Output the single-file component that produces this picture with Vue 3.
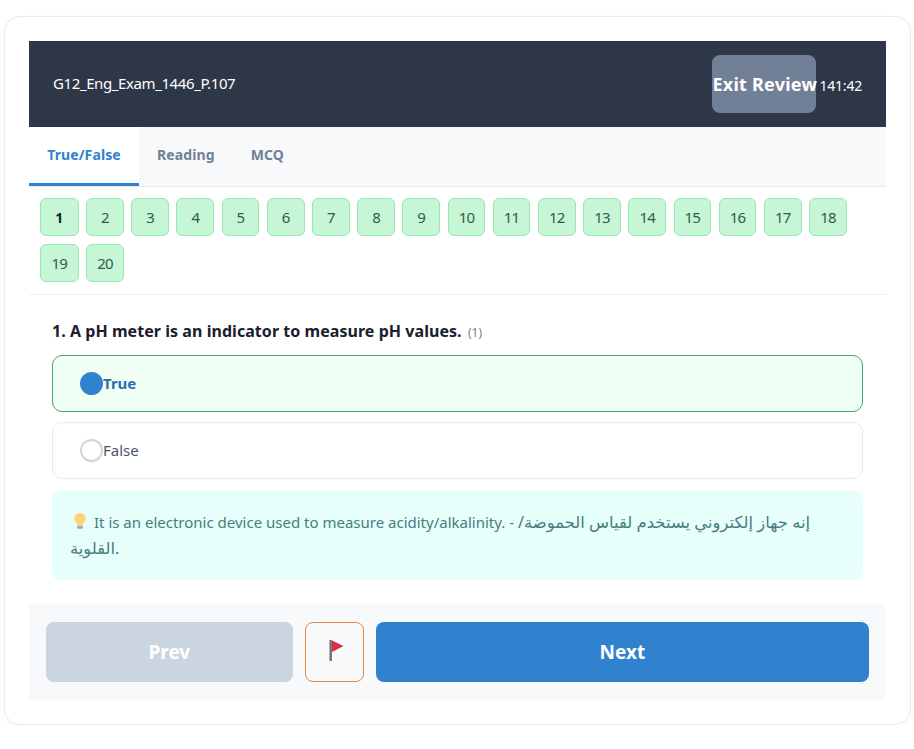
<script setup>
const tabs = ['True/False', 'Reading', 'MCQ']
const numbers = Array.from({ length: 20 }, (_, i) => i + 1)
</script>

<template>
  <div class="page">
    <main class="card">
      <header class="top">
        <h1 class="title">G12_Eng_Exam_1446_P.107</h1>
        <div class="top-right">
          <button class="exit">Exit Review</button>
          <span class="timer">141:42</span>
        </div>
      </header>
      <nav class="tabs">
        <button v-for="(t, i) in tabs" :key="t" class="tab" :class="{ active: i === 0 }">{{ t }}</button>
      </nav>
      <div class="numbers">
        <button v-for="n in numbers" :key="n" class="num" :class="{ current: n === 1 }">{{ n }}</button>
      </div>
      <section class="body">
        <p class="question">1. A pH meter is an indicator to measure pH values. <span class="mark">(1)</span></p>
        <div class="option chosen">
          <span class="radio filled"></span>
          <span>True</span>
        </div>
        <div class="option">
          <span class="radio"></span>
          <span>False</span>
        </div>
        <div class="hint">
          <svg class="bulb" viewBox="0 0 14 18" width="14" height="18" aria-hidden="true">
            <path d="M7 1a5.600 5.600 0 0 0-5.600 5.600c0 2.300 1.400 3.400 2.300 5 .3.500.4 1 .4 1.400h5.800c0-.5.1-1 .4-1.400.9-1.600 2.300-2.700 2.300-5A5.600 5.600 0 0 0 7 1z" fill="#fdd575"/>
            <rect x="4.200" y="13.400" width="5.600" height="3.400" rx="1" fill="#a8a8a8"/>
          </svg>
          <span>It is an electronic device used to measure acidity/alkalinity. - </span>
          <span class="arabic">إنه جهاز إلكتروني يستخدم لقياس الحموضة/</span>
          <span class="arabic">القلوية.</span>
        </div>
      </section>
      <footer class="foot">
        <button class="btn prev">Prev</button>
        <button class="flag" aria-label="Flag">
          <svg viewBox="0 0 20 24" width="20" height="24" aria-hidden="true">
            <rect x="5.500" y="0" width="2.400" height="21" fill="#6b6f78"/>
            <path d="M8 .5 19.500 6 8 12z" fill="#dd2e44"/>
          </svg>
        </button>
        <button class="btn next">Next</button>
      </footer>
    </main>
  </div>
</template>

<style>
html, body { margin: 0; background: #fff; }
</style>

<style scoped>
.page {
  padding: 16px 3px 0 4px;
  font-family: "Noto Sans", "DejaVu Sans", sans-serif;
  color: #1a202c;
}
.card {
  box-sizing: border-box;
  height: 709px;
  padding: 24px;
  background: #fff;
  border: 1px solid #e9ebee;
  border-radius: 16px;
  box-shadow: 0 4px 12px rgba(0, 0, 0, 0.025);
}
button { font-family: inherit; cursor: pointer; }
.top {
  display: flex;
  align-items: center;
  justify-content: space-between;
  height: 86px;
  padding: 0 24px;
  background: #2d3748;
  color: #fff;
}
.title { margin: -2px 0 0; font-size: 15px; font-weight: 400; letter-spacing: -0.4px; }
.top-right { display: flex; align-items: center; gap: 3px; }
.exit {
  width: 104px;
  height: 58px;
  padding: 0;
  border: 0;
  border-radius: 8px;
  background: #718096;
  color: #fff;
  font-size: 18px;
  font-weight: 700;
  letter-spacing: 0.25px;
  white-space: nowrap;
}
.timer { font-size: 14px; letter-spacing: -0.2px; margin-top: 2px; }
.tabs {
  display: flex;
  height: 60px;
  box-sizing: border-box;
  background: #f7f9fb;
  border-bottom: 1px solid #e2e8f0;
}
.tab {
  box-sizing: border-box;
  height: 59px;
  padding: 0 18px 2px;
  border: 0;
  border-bottom: 3px solid transparent;
  background: transparent;
  color: #718096;
  font-size: 14px;
  font-weight: 700;
  letter-spacing: 0.1px;
}
.tab.active { width: 110px; background: #fff; color: #3182ce; border-bottom-color: #3182ce; }
.numbers {
  display: flex;
  flex-wrap: wrap;
  gap: 8px 7.500px;
  padding: 11px;
  height: 108px;
  box-sizing: border-box;
  border-bottom: 1px solid #edf0f4;
  align-content: flex-start;
}
.num {
  box-sizing: border-box;
  width: 37.700px;
  height: 38px;
  padding: 0;
  border: 1px solid #9ae6b4;
  border-radius: 6px;
  background: #c6f6d5;
  color: #2c6044;
  font-size: 15px;
  letter-spacing: -0.8px;
}
.num:nth-child(18n+1) { width: 38.600px; }
.num.current { font-weight: 700; color: #1a202c; font-size: 14px; letter-spacing: 0; }
.body { padding: 24px 23px 0; }
.question { margin: 0 0 10px; font-size: 16px; font-weight: 700; line-height: 24px; color: #1a202c; letter-spacing: 0.05px; }
.mark { margin-left: 2px; font-size: 12px; font-weight: 400; color: #718096; }
.option {
  box-sizing: border-box;
  display: flex;
  align-items: center;
  height: 57px;
  margin-bottom: 10px;
  padding: 0 27px;
  border: 1px solid #e8eaed;
  border-radius: 10px;
  font-size: 15px;
  color: #4a5568;
}
.option span:last-child { margin-top: -1px; }
.option.chosen { border-color: #48a278; background: #f0fff4; color: #2b6cb0; font-weight: 700; }
.radio {
  box-sizing: border-box;
  flex: none;
  width: 23px;
  height: 23px;
  border: 2px solid #d1d5db;
  border-radius: 50%;
}
.radio.filled { border-color: #3182ce; background: #3182ce; }
.hint {
  box-sizing: border-box;
  height: 89px;
  margin-top: 12px;
  padding: 18px;
  border-radius: 8px;
  background: #e6fffa;
  color: #4a7c7e;
  font-size: 15px;
  line-height: 26px;
}
.arabic { font-size: 16.400px; }
.bulb { vertical-align: -2px; margin: 0 7px 0 3px; }
.foot {
  display: flex;
  align-items: center;
  gap: 12px;
  height: 96px;
  margin-top: 24px;
  padding: 0 17px;
  box-sizing: border-box;
  background: #f7f9fb;
}
.btn {
  flex: 1;
  height: 60px;
  padding: 0;
  border: 0;
  border-radius: 8px;
  color: #fff;
  font-size: 19px;
  font-weight: 700;
}
.prev { background: #cbd5e0; }
.next { flex: 2; background: #3182ce; }
.flag {
  display: flex;
  align-items: center;
  justify-content: center;
  flex: none;
  width: 59px;
  height: 60px;
  padding: 0;
  border: 1px solid #dd8a4a;
  border-radius: 8px;
  background: transparent;
}
</style>
